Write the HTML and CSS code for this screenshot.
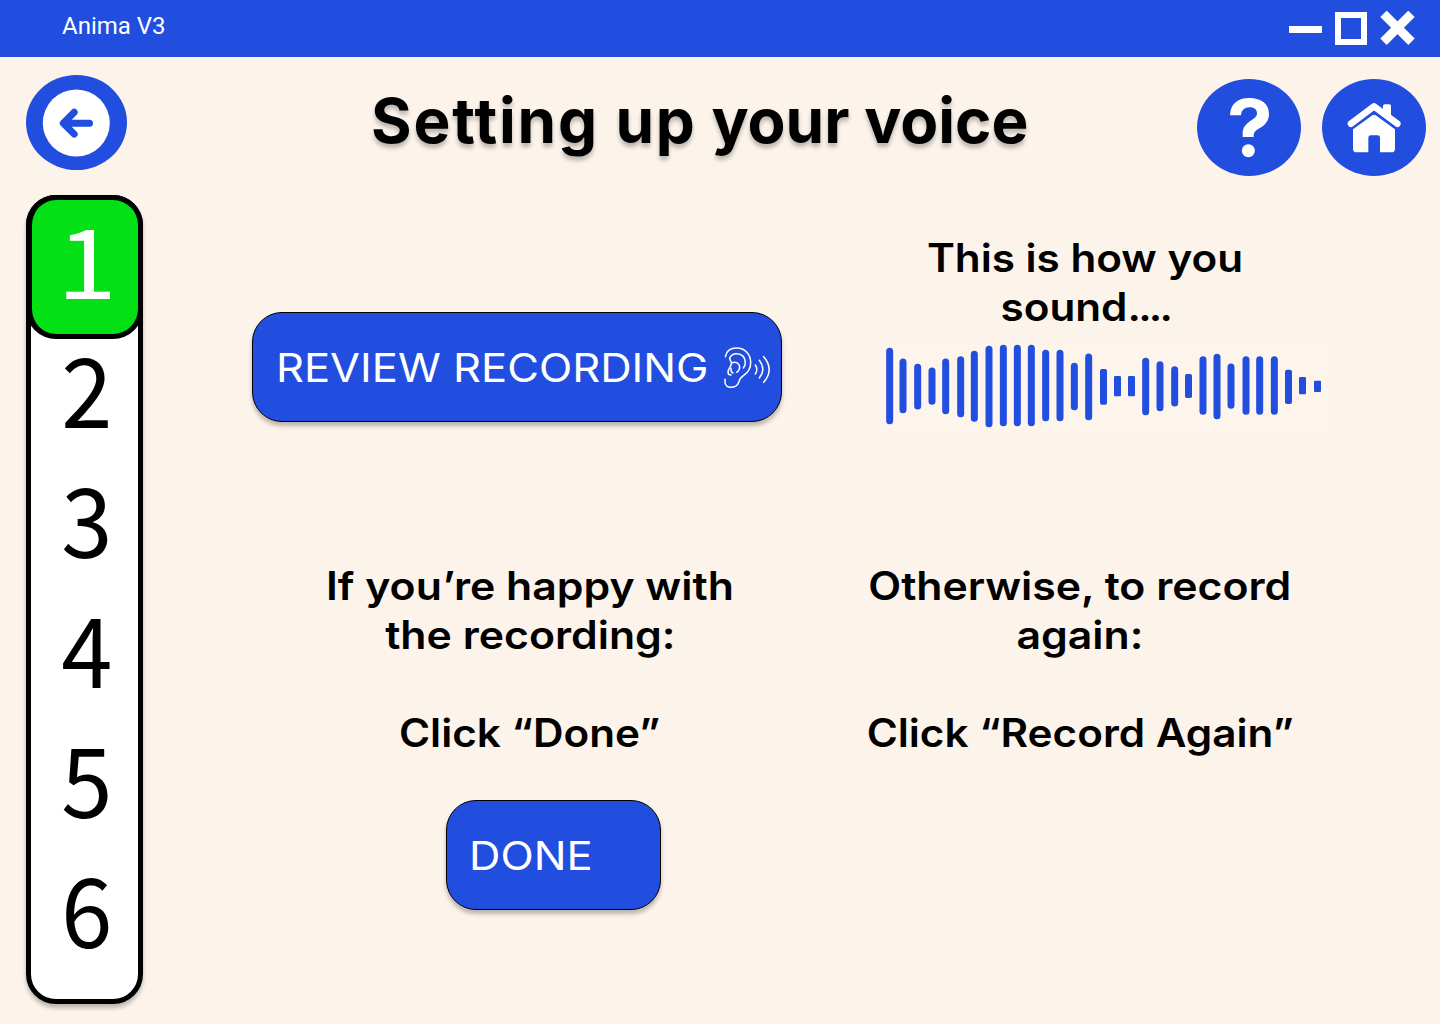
FILE: index.html
```html
<!DOCTYPE html>
<html lang="en">
<head>
<meta charset="utf-8">
<title>Anima V3</title>
<link rel="stylesheet" href="styles.css">
</head>
<body>
<div class="titlebar">
  <span class="app-name">Anima V3</span>
  <svg class="window-controls" width="126" height="36" viewBox="0 0 126 36">
    <path d="M0 15h33v7H0z" fill="#fff"/>
    <path d="M49 4h26v27H49z" fill="none" stroke="#fff" stroke-width="6"/>
    <path d="M94.500 2.800l28 28M122.500 2.800l-28 28" stroke="#fff" stroke-width="9"/>
  </svg>
</div>

<header class="header">
  <button class="round back" aria-label="Back">
    <svg width="101" height="95" viewBox="0 0 101 95">
      <circle cx="50.300" cy="48" r="33.500" fill="#fff"/>
      <path d="M63.500 48.200H38M48.200 37.300L37.300 48.200l10.900 10.900" fill="none" stroke="#214edf" stroke-width="7" stroke-linecap="round" stroke-linejoin="round"/>
    </svg>
  </button>
  <h1 class="title"><span class="spaced">Setting up</span> your voice</h1>
  <div class="actions">
    <button class="round" aria-label="Help">
      <svg width="104" height="97" viewBox="0 0 312 291">
        <path d="M99 109c1-34 23-52 58-52 37 0 59 19 59 47 0 20-9 32-29 44-13 8-17 13-17 22v4h-33v-10c0-18 8-28 26-40 13-8 17-13 17-21 0-11-8-18-22-18-16 0-25 9-26 24z" fill="#fff"/>
        <circle cx="154" cy="215" r="19.500" fill="#fff"/>
      </svg>
    </button>
    <button class="round" aria-label="Home">
      <svg width="104" height="97" viewBox="0 0 312 291">
        <path d="M87 134L156 82l70 52" fill="none" stroke="#fff" stroke-width="20" stroke-linecap="round" stroke-linejoin="round"/>
        <path d="M183 96V81q0-5 5-5h14q5 0 5 5v36z" fill="#fff"/>
        <path d="M93 151l58-42q5-3 10 0l58 42v58q0 11-11 11h-34v-44q0-7-7-7h-21q-7 0-7 7v44h-35q-11 0-11-11z" fill="#fff"/>
      </svg>
    </button>
  </div>
</header>

<main class="main">
  <ol class="steps">
    <li class="step current"><span>1</span></li>
    <li class="step"><span>2</span></li>
    <li class="step"><span>3</span></li>
    <li class="step"><span>4</span></li>
    <li class="step"><span>5</span></li>
    <li class="step"><span>6</span></li>
  </ol>

  <section class="column accept">
    <button class="button review">
      <span class="label">REVIEW RECORDING</span>
      <svg class="ear" width="48" height="43" viewBox="250 136 144 129" fill="none" stroke="#fff" stroke-width="4.500" stroke-linecap="round" stroke-linejoin="round">
        <path d="M257 168c3-16 16-26 34-26 25 0 42 19 42 44 0 17-9 30-21 38-9 6-12 10-14 19-4 11-13 17-24 17-11 0-18-7-18-15v-9"/>
        <path d="M270 172c3-8 11-13 21-13 16 0 26 11 26 26 0 7-2 13-6 17"/>
        <path d="M270 172c0 7 5 9 5 16 0 11-10 16-10 26 0 6 4 9 9 9"/>
        <path d="M277 186c12-4 22 2 23 13 0 7-3 12-9 16M274 203c-1 7 1 12 6 14"/>
        <path d="M347 193q9 13 0 27M359 179q21 27 0 53M372 168q33 38 0 77"/>
      </svg>
    </button>
    <div class="copy">
      <p><span class="line wide">If you’re happy with</span><br><span class="line wide">the recording:</span></p>
      <p><span class="line">Click “Done”</span></p>
    </div>
    <button class="button done"><span class="label">DONE</span></button>
  </section>

  <section class="column retry">
    <p class="copy sound"><span class="line">This is how you</span><br><span class="line">sound<span class="dots">....</span></span></p>
    <svg class="wave" width="448" height="100" viewBox="30 21 1344 300">
      <path d="M59 64V272M99 96V239M143 112V228M186 123V214M227 96V242M272 89V251M313 73V265M357 58V281M400 55V278M442 55V278M484 55V278M527 70V263M570 70V263M613 109V230M656 81V260M827 94V245M870 104V233M914 119V219M999 89V244M1041 82V257M1083 111V226M1128 89V244M1169 89V244M1213 89V244" stroke="#214edf" stroke-width="21" stroke-linecap="round"/>
      <g fill="#214edf">
        <rect x="690" y="117" width="21" height="107" rx="6"/>
        <rect x="732" y="138" width="21" height="61" rx="4"/>
        <rect x="774" y="138" width="21" height="61" rx="4"/>
        <rect x="945" y="132" width="21" height="72" rx="5"/>
        <rect x="1245" y="119" width="21" height="103" rx="6"/>
        <rect x="1287" y="141" width="21" height="52" rx="4"/>
        <rect x="1332" y="152" width="21" height="34" rx="3"/>
      </g>
    </svg>
    <div class="copy">
      <p><span class="line wide">Otherwise, to record</span><br><span class="line wide">again:</span></p>
      <p><span class="line">Click “Record Again”</span></p>
    </div>
  </section>
</main>
</body>
</html>
```
FILE: styles.css
```css
* { box-sizing: border-box; margin: 0; padding: 0; }

body {
  width: 1440px;
  height: 1024px;
  overflow: hidden;
  background: #fcf3ea;
  color: #000;
  font-family: Inter, "Liberation Sans", sans-serif;
}

button { border: 0; background: none; font: inherit; color: inherit; }
svg { display: block; flex: none; }

.titlebar {
  display: flex;
  justify-content: space-between;
  height: 57px;
  padding: 11px 25px 0 62px;
  background: #214edf;
  color: #fff;
}
.app-name { font: 24px/30px Roboto, sans-serif; }

.header {
  display: flex;
  align-items: flex-start;
  height: 138px;
  padding: 18px 14px 0 26px;
}
.round { border-radius: 50%; background: #214edf; }
.title {
  margin-left: 244px;
  font-size: 62px;
  font-weight: 700;
  line-height: 78px;
  padding-top: 7px;
  white-space: nowrap;
  text-shadow: 0 4px 4px rgba(0, 0, 0, .25);
}
.title .spaced { letter-spacing: 1.8px; }
.actions { display: flex; gap: 21px; margin: 4px 0 0 auto; }

.main { display: flex; align-items: flex-start; padding-left: 26px; }

.steps {
  width: 117px;
  height: 809px;
  list-style: none;
  border: 5px solid #000;
  border-radius: 30px;
  background: #fff;
  box-shadow: 0 4px 4px rgba(0, 0, 0, .25);
  font: 97px/122px "Noto Sans CJK SC", "Noto Sans", sans-serif;
  text-align: center;
}
.step { height: 130px; padding-left: 4px; }
.step span { display: inline-block; transform: scaleX(.95); }
.current {
  height: 144px;
  margin: -5px -5px -14px;
  padding: 5px 0 0 3px;
  border: 5px solid #000;
  border-left-width: 6px;
  border-radius: 30px;
  background: #03e116;
  color: #fff;
  line-height: 103px;
}
.current span { transform: scaleX(1.12); }

.column { display: flex; flex-direction: column; align-items: flex-start; }
.accept { width: 530px; margin-left: 109px; padding-top: 117px; }
.retry { width: 450px; margin-left: 78px; padding-top: 38px; }

.button {
  display: flex;
  align-items: center;
  height: 110px;
  border: 1px solid #000;
  border-radius: 30px;
  background: #214edf;
  color: #fff;
  box-shadow: 0 4px 4px rgba(0, 0, 0, .25);
  font-size: 39px;
}
.label { transform: scaleX(1.115); transform-origin: 0 50%; }
.review { width: 530px; padding: 0 10px 0 23px; justify-content: space-between; }
.done { width: 215px; margin: 43px 0 0 194px; padding-left: 22px; }

.copy {
  font-size: 39px;
  font-weight: 600;
  line-height: 49px;
  text-align: center;
  white-space: nowrap;
}
.copy p + p { margin-top: 49px; }
.line { display: inline-block; transform: scaleX(1.083); }
.wide { transform: scaleX(1.097); }
.dots { letter-spacing: -2.600px; }
.accept .copy { width: 556px; margin-top: 139px; }
.retry .copy { width: 440px; margin-top: 124px; }
.retry .sound { width: 450px; margin-top: 0; }
.wave { margin: 6px 0 0 20px; background: #fdf4eb; }
```
